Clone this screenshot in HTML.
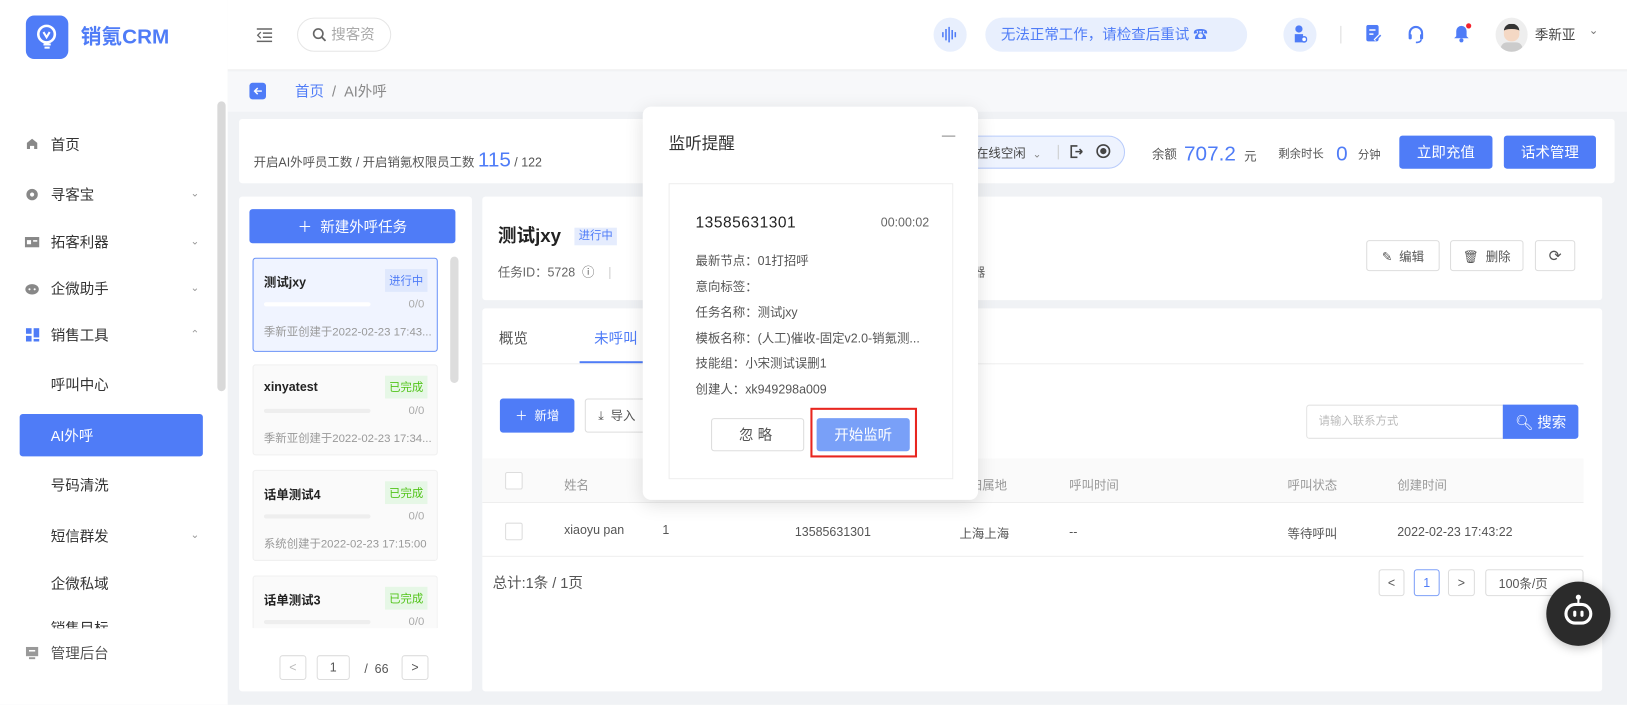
<!DOCTYPE html>
<html><head><meta charset="utf-8"><style>
*{box-sizing:border-box;margin:0;padding:0}
body{width:1627px;height:705px;overflow:hidden;background:#fff;font-family:"Liberation Sans","Noto Sans CJK SC",sans-serif;color:#333}
#w{position:absolute;left:0;top:0;width:1572px;height:681px;transform:scale(1.035);transform-origin:0 0;background:#f0f2f5;overflow:hidden}
.a{position:absolute}
.t{position:absolute;white-space:nowrap;line-height:1}
.blue{color:#4f7cf7}
.btn{position:absolute;background:#4f7cf7;color:#fff;border-radius:3px;display:flex;align-items:center;justify-content:center;font-size:14px}
.wb{position:absolute;background:#fff;border:1px solid #ddd;border-radius:3px;display:flex;align-items:center;justify-content:center;font-size:12px;color:#555}
.nav{position:absolute;left:49px;font-size:14px;color:#333;line-height:1}
.chev{position:absolute;left:184px;font-size:10px;color:#999}
.item{position:absolute;left:244px;width:179px;background:#fafafa;border:1px solid #f0f0f0;border-radius:3px}
.item .n{position:absolute;left:10px;top:14px;font-size:12px;font-weight:bold;color:#222}
.item .g{position:absolute;right:9px;top:10px;font-size:11px;color:#52c41a;background:#e6f7e6;padding:3px 4px}
.item .bar{position:absolute;left:10px;top:42px;width:103px;height:4px;background:#eee;border-radius:2px}
.item .r{position:absolute;right:12px;top:38px;font-size:11px;color:#aaa}
.item .d{position:absolute;left:10px;top:62px;font-size:11px;color:#999;white-space:nowrap}
.ml{position:absolute;left:672px;font-size:12px;color:#555;white-space:nowrap}
.th{position:absolute;top:460px;font-size:12px;color:#999;white-space:nowrap}
.td{position:absolute;top:507px;font-size:12px;color:#555;white-space:nowrap}
.cb{position:absolute;left:488px;width:17px;height:17px;border:1px solid #ddd;border-radius:2px;background:#fff}
</style></head><body><div id="w">

<!-- sidebar -->
<div class="a" style="left:0;top:0;width:220px;height:681px;background:#fff"></div>
<div class="a" style="left:25px;top:15px;width:41px;height:42px;background:#4f7cf7;border-radius:8px"></div>
<svg class="a" style="left:33px;top:22px" width="25" height="28" viewBox="0 0 25 28"><circle cx="12" cy="11" r="8" fill="none" stroke="#fff" stroke-width="2.5"/><path d="M9 9l3 5 3-5" stroke="#fff" stroke-width="2" fill="none"/><path d="M9 21h7M10 24h5" stroke="#fff" stroke-width="2"/></svg>
<div class="t blue" style="left:78px;top:26px;font-size:20px;font-weight:bold">销氪CRM</div>
<div class="a" style="left:210px;top:98px;width:8px;height:280px;background:#d9d9d9;border-radius:4px"></div>

<svg class="a" style="left:25px;top:133px" width="12" height="12"><path d="M1 11V5l5-4 5 4v6H8V8H4v3z" fill="#888"/></svg>
<div class="nav" style="top:133px">首页</div>
<svg class="a" style="left:25px;top:182px" width="12" height="12"><circle cx="6" cy="6" r="5.5" fill="#888"/><circle cx="6" cy="6" r="2" fill="#fff"/></svg>
<div class="nav" style="top:181px">寻客宝</div><div class="chev" style="top:182px">⌄</div>
<svg class="a" style="left:24px;top:229px" width="14" height="10"><rect width="14" height="10" fill="#888"/><rect x="2" y="3" width="4" height="4" fill="#fff"/><rect x="8" y="3" width="4" height="1.5" fill="#fff"/></svg>
<div class="nav" style="top:227px">拓客利器</div><div class="chev" style="top:228px">⌄</div>
<svg class="a" style="left:24px;top:274px" width="14" height="11"><ellipse cx="7" cy="5.5" rx="6.5" ry="5" fill="#888"/><circle cx="4.5" cy="5.5" r="1" fill="#fff"/><circle cx="9.5" cy="5.5" r="1" fill="#fff"/></svg>
<div class="nav" style="top:272px">企微助手</div><div class="chev" style="top:273px">⌄</div>
<svg class="a" style="left:25px;top:317px" width="13" height="13"><rect width="5.5" height="5.5" fill="#4f7cf7"/><rect x="7.5" width="5.5" height="9" fill="#4f7cf7"/><rect y="7.5" width="5.5" height="5.5" fill="#4f7cf7"/><rect x="7.5" y="10.5" width="5.5" height="2.5" fill="#4f7cf7"/></svg>
<div class="nav blue" style="top:317px">销售工具</div><div class="chev" style="top:318px">⌃</div>
<div class="nav" style="top:365px">呼叫中心</div>
<div class="a" style="left:19px;top:400px;width:177px;height:41px;background:#4f7cf7;border-radius:3px"></div>
<div class="nav" style="top:414px;color:#fff">AI外呼</div>
<div class="nav" style="top:462px">号码清洗</div>
<div class="nav" style="top:511px">短信群发</div><div class="chev" style="top:512px">⌄</div>
<div class="nav" style="top:557px">企微私域</div>
<div class="nav" style="top:600px;height:7px;overflow:hidden">销售目标</div>
<svg class="a" style="left:25px;top:625px" width="12" height="12"><rect width="12" height="9" fill="#999"/><rect x="3" y="10" width="6" height="2" fill="#999"/><rect x="3" y="3" width="6" height="1.5" fill="#fff"/></svg>
<div class="nav" style="top:624px;color:#555">管理后台</div>

<!-- header -->
<div class="a" style="left:220px;top:0;width:1352px;height:68px;background:#fff;border-bottom:1px solid #eee"></div>
<svg class="a" style="left:248px;top:27px" width="15" height="14"><path d="M0 1h15M6 5h9M6 9h9M0 13h15" stroke="#666" stroke-width="1.5"/><path d="M4 4L1 7l3 3" stroke="#666" stroke-width="1.3" fill="none"/></svg>
<div class="a" style="left:287px;top:17px;width:91px;height:33px;border:1px solid #e6e6e6;border-radius:17px"></div>
<svg class="a" style="left:302px;top:27px" width="13" height="13"><circle cx="5.5" cy="5.5" r="4.5" stroke="#666" stroke-width="1.6" fill="none"/><path d="M9 9l3.5 3.5" stroke="#666" stroke-width="1.8"/></svg>
<div class="t" style="left:320px;top:26px;font-size:14px;color:#aaa">搜客资</div>
<div class="a" style="left:902px;top:17px;width:32px;height:33px;background:#e8effd;border-radius:50%"></div>
<svg class="a" style="left:909px;top:25px" width="18" height="17"><path d="M2 6v5M5 3v11M8 1v15M11 4v9M14 6v5" stroke="#4f7cf7" stroke-width="1.5"/></svg>
<div class="a" style="left:952px;top:17px;width:253px;height:33px;background:#e8effd;border-radius:17px"></div>
<div class="t blue" style="left:967px;top:26px;font-size:14px">无法正常工作，请检查后重试 ☎</div>
<div class="a" style="left:1240px;top:17px;width:32px;height:33px;background:#e8effd;border-radius:50%"></div>
<svg class="a" style="left:1249px;top:24px" width="14" height="18"><circle cx="6" cy="4" r="3.5" fill="#4f7cf7"/><path d="M2 17V9h8v8z" fill="#4f7cf7"/><circle cx="11" cy="14" r="2.5" fill="#fff" stroke="#4f7cf7" stroke-width="1.5"/></svg>
<div class="a" style="left:1295px;top:25px;width:1px;height:17px;background:#ddd"></div>
<svg class="a" style="left:1320px;top:24px" width="15" height="18"><rect x="0" y="0" width="12" height="16" rx="2" fill="#4f7cf7"/><path d="M3 5h6M3 9h4" stroke="#fff" stroke-width="1.5"/><path d="M8 15l5-5" stroke="#fff" stroke-width="2.5"/><path d="M9 15l5-5" stroke="#4f7cf7" stroke-width="1.5"/></svg>
<svg class="a" style="left:1360px;top:24px" width="16" height="18"><path d="M2 10V8a6 6 0 0112 0v2" stroke="#4f7cf7" stroke-width="2" fill="none"/><rect x="1" y="9" width="3" height="5" rx="1" fill="#4f7cf7"/><rect x="12" y="9" width="3" height="5" rx="1" fill="#4f7cf7"/><path d="M13 14q0 3-5 3" stroke="#4f7cf7" stroke-width="1.5" fill="none"/></svg>
<svg class="a" style="left:1404px;top:22px" width="18" height="20"><path d="M8 3a5 5 0 015 5v5l2 2H1l2-2V8a5 5 0 015-5z" fill="#4f7cf7"/><circle cx="8" cy="17" r="2" fill="#4f7cf7"/><circle cx="15" cy="3" r="2.5" fill="#f5222d"/></svg>
<div class="a" style="left:1445px;top:17px;width:31px;height:33px;background:#eee;border-radius:50%;overflow:hidden"><div class="a" style="left:8px;top:6px;width:15px;height:17px;background:#f4d8c4;border-radius:7px;border-top:5px solid #333"></div><div class="a" style="left:5px;top:24px;width:21px;height:12px;background:#ccc;border-radius:6px 6px 0 0"></div></div>
<div class="t" style="left:1483px;top:27px;font-size:13px;color:#444">季新亚</div>
<div class="t" style="left:1535px;top:25px;font-size:11px;color:#777">⌄</div>

<!-- breadcrumb -->
<div class="a" style="left:220px;top:69px;width:1352px;height:39px;background:#f7f8fa"></div>
<div class="a" style="left:241px;top:80px;width:16px;height:16px;background:#4f7cf7;border-radius:3px"></div>
<svg class="a" style="left:244px;top:83px" width="10" height="10"><path d="M9 5H2M5 2L2 5l3 3" stroke="#fff" stroke-width="1.4" fill="none"/></svg>
<div class="t" style="left:285px;top:81px;font-size:14px"><span class="blue">首页</span><span style="color:#888">&nbsp; / &nbsp;AI外呼</span></div>

<!-- stats card -->
<div class="a" style="left:231px;top:115px;width:1329px;height:62px;background:#fff;border-radius:3px"></div>
<div class="t" style="left:245px;top:145px;font-size:12px;color:#555">开启AI外呼员工数 / 开启销氪权限员工数 <span class="blue" style="font-size:20px">115</span> / 122</div>
<div class="a" style="left:880px;top:131px;width:207px;height:32px;background:#eef3fe;border:1px solid #b9ccfb;border-radius:16px"></div>
<div class="t" style="left:943px;top:142px;font-size:12px;color:#444">在线空闲 &nbsp;<span style="color:#888;font-size:10px">⌄</span></div>
<div class="a" style="left:1022px;top:140px;width:1px;height:14px;background:#ccc"></div>
<svg class="a" style="left:1034px;top:140px" width="12" height="13"><path d="M7 1H1v11h6" stroke="#444" stroke-width="1.6" fill="none"/><path d="M5 6.5h6M9 4l2.5 2.5L9 9" stroke="#444" stroke-width="1.5" fill="none"/></svg>
<svg class="a" style="left:1059px;top:139px" width="14" height="14"><circle cx="7" cy="7" r="6" stroke="#444" stroke-width="1.6" fill="none"/><circle cx="7" cy="7" r="3" fill="#444"/></svg>
<div class="t" style="left:1113px;top:143px;font-size:12px;color:#555">余额</div>
<div class="t blue" style="left:1144px;top:139px;font-size:20px">707.2</div>
<div class="t" style="left:1202px;top:145px;font-size:12px;color:#555">元</div>
<div class="t" style="left:1235px;top:144px;font-size:11px;color:#555">剩余时长</div>
<div class="t blue" style="left:1291px;top:139px;font-size:20px">0</div>
<div class="t" style="left:1312px;top:145px;font-size:11px;color:#555">分钟</div>
<div class="btn" style="left:1352px;top:131px;width:90px;height:32px">立即充值</div>
<div class="btn" style="left:1453px;top:131px;width:89px;height:32px">话术管理</div>

<!-- left list -->
<div class="a" style="left:231px;top:190px;width:225px;height:478px;background:#fff;border-radius:3px"></div>
<div class="btn" style="left:241px;top:202px;width:199px;height:33px">＋&nbsp; 新建外呼任务</div>
<div class="a" style="left:435px;top:248px;width:8px;height:122px;background:#ddd;border-radius:4px"></div>
<div class="item" style="top:249px;height:91px;background:#f0f4ff;border:1px solid #6b93f8"><div class="n">测试jxy</div><div class="g" style="color:#4f7cf7;background:#dfe8fd">进行中</div><div class="bar" style="background:#fff"></div><div class="r">0/0</div><div class="d">季新亚创建于2022-02-23 17:43...</div></div>
<div class="item" style="top:352px;height:88px"><div class="n">xinyatest</div><div class="g">已完成</div><div class="bar"></div><div class="r">0/0</div><div class="d">季新亚创建于2022-02-23 17:34...</div></div>
<div class="item" style="top:454px;height:88px"><div class="n">话单测试4</div><div class="g">已完成</div><div class="bar"></div><div class="r">0/0</div><div class="d">系统创建于2022-02-23 17:15:00</div></div>
<div class="item" style="top:556px;height:51px;border-bottom:none;overflow:hidden;border-radius:3px 3px 0 0"><div class="n">话单测试3</div><div class="g">已完成</div><div class="bar"></div><div class="r">0/0</div></div>
<div class="wb" style="left:270px;top:633px;width:26px;height:24px;color:#bbb">&lt;</div>
<div class="wb" style="left:306px;top:633px;width:32px;height:24px">1</div>
<div class="t" style="left:352px;top:640px;font-size:12px;color:#555">/&nbsp; 66</div>
<div class="wb" style="left:388px;top:633px;width:26px;height:24px">&gt;</div>

<!-- right card -->
<div class="a" style="left:466px;top:190px;width:1082px;height:100px;background:#fff;border-radius:3px"></div>
<div class="t" style="left:481px;top:219px;font-size:18px;font-weight:bold;color:#222">测试jxy</div>
<div class="t" style="left:555px;top:220px;font-size:11px;color:#4f7cf7;background:#e5ecfd;padding:3px 4px">进行中</div>
<div class="t" style="left:481px;top:257px;font-size:12px;color:#666">任务ID：5728 &nbsp;ⓘ &nbsp;&nbsp; <span style="color:#ccc">|</span></div>
<div class="t" style="left:940px;top:257px;font-size:12px;color:#666">器</div>
<div class="wb" style="left:1320px;top:232px;width:71px;height:30px">✎&nbsp; 编辑</div>
<div class="wb" style="left:1401px;top:232px;width:71px;height:30px">🗑&nbsp; 删除</div>
<div class="wb" style="left:1483px;top:232px;width:39px;height:30px;font-size:15px">⟳</div>

<div class="a" style="left:466px;top:298px;width:1082px;height:370px;background:#fff;border-radius:3px"></div>
<div class="t" style="left:482px;top:320px;font-size:14px;color:#555">概览</div>
<div class="t blue" style="left:574px;top:320px;font-size:14px">未呼叫</div>
<div class="a" style="left:560px;top:349px;width:62px;height:2px;background:#4f7cf7"></div>
<div class="a" style="left:466px;top:351px;width:1064px;height:1px;background:#eee"></div>
<div class="btn" style="left:483px;top:385px;width:72px;height:33px;font-size:12px">＋&nbsp; 新增</div>
<div class="wb" style="left:565px;top:385px;width:72px;height:33px;justify-content:flex-start;padding-left:12px">⤓&nbsp; 导入</div>
<div class="a" style="left:1262px;top:391px;width:191px;height:33px;border:1px solid #e3e3e3;border-radius:3px 0 0 3px"></div>
<div class="t" style="left:1274px;top:402px;font-size:11px;color:#bbb">请输入联系方式</div>
<div class="btn" style="left:1452px;top:391px;width:73px;height:33px;border-radius:0 3px 3px 0">🔍︎ 搜索</div>
<div class="a" style="left:466px;top:443px;width:1064px;height:43px;background:#fafafa;border-bottom:1px solid #eee"></div>
<div class="cb" style="top:456px"></div>
<div class="th" style="left:545px">姓名</div>
<div class="th" style="left:913px">号码归属地</div>
<div class="th" style="left:1033px">呼叫时间</div>
<div class="th" style="left:1244px">呼叫状态</div>
<div class="th" style="left:1350px">创建时间</div>
<div class="a" style="left:466px;top:537px;width:1064px;height:1px;background:#eee"></div>
<div class="cb" style="top:505px"></div>
<div class="td" style="left:545px;top:505px">xiaoyu pan</div>
<div class="td" style="left:640px;top:505px">1</div>
<div class="td" style="left:768px">13585631301</div>
<div class="td" style="left:927px">上海上海</div>
<div class="td" style="left:1033px">--</div>
<div class="td" style="left:1244px">等待呼叫</div>
<div class="td" style="left:1350px">2022-02-23 17:43:22</div>
<div class="t" style="left:476px;top:556px;font-size:14px;color:#555">总计:1条 / 1页</div>
<div class="wb" style="left:1332px;top:550px;width:25px;height:26px">&lt;</div>
<div class="wb" style="left:1366px;top:550px;width:25px;height:26px;border-color:#7ea0f8;color:#4f7cf7">1</div>
<div class="wb" style="left:1399px;top:550px;width:26px;height:26px">&gt;</div>
<div class="wb" style="left:1435px;top:550px;width:95px;height:26px;justify-content:flex-start;padding-left:12px">100条/页</div>

<!-- robot -->
<div class="a" style="left:1494px;top:562px;width:62px;height:62px;background:#2b2b2b;border-radius:50%;box-shadow:0 2px 10px rgba(0,0,0,.25)"></div>
<svg class="a" style="left:1509px;top:573px" width="32" height="36"><circle cx="16" cy="4" r="2.5" fill="#fff"/><path d="M16 6v5" stroke="#fff" stroke-width="2"/><rect x="4" y="11" width="24" height="18" rx="9" fill="none" stroke="#fff" stroke-width="3"/><rect x="11" y="17" width="3" height="6" rx="1.5" fill="#fff"/><rect x="18" y="17" width="3" height="6" rx="1.5" fill="#fff"/></svg>

<!-- modal -->
<div class="a" style="left:621px;top:103px;width:324px;height:380px;background:#fff;border-radius:8px;box-shadow:0 4px 18px rgba(0,0,0,.12)"></div>
<div class="t" style="left:646px;top:132px;font-size:16px;color:#333">监听提醒</div>
<div class="a" style="left:910px;top:131px;width:13px;height:1px;background:#888"></div>
<div class="a" style="left:646px;top:177px;width:275px;height:286px;border:1px solid #eee"></div>
<div class="t" style="left:672px;top:208px;font-size:15px;color:#222;letter-spacing:.5px">13585631301</div>
<div class="t" style="left:851px;top:209px;font-size:12px;color:#666">00:00:02</div>
<div class="ml" style="top:243px">最新节点：01打招呼</div>
<div class="ml" style="top:268px">意向标签：</div>
<div class="ml" style="top:293px">任务名称：测试jxy</div>
<div class="ml" style="top:318px">模板名称：(人工)催收-固定v2.0-销氪测...</div>
<div class="ml" style="top:342px">技能组：小宋测试误删1</div>
<div class="ml" style="top:367px">创建人：xk949298a009</div>
<div class="wb" style="left:687px;top:404px;width:90px;height:32px;font-size:14px;color:#555;letter-spacing:4px">忽略</div>
<div class="a" style="left:783px;top:394px;width:103px;height:48px;border:2px solid #e8261f"></div>
<div class="btn" style="left:789px;top:404px;width:90px;height:32px;background:#79a0f8">开始监听</div>

</div></body></html>
